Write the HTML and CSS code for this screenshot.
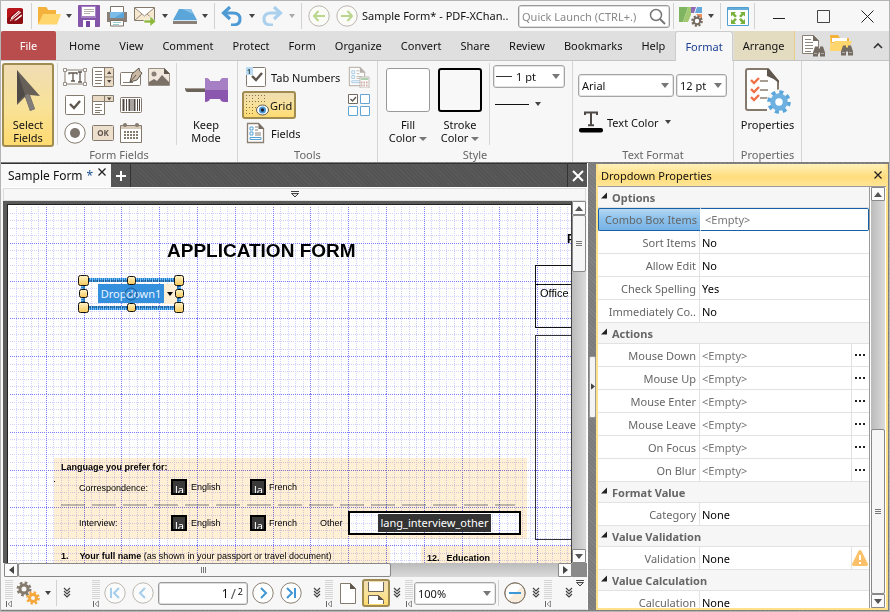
FILE: index.html
```html
<!DOCTYPE html>
<html lang="en">
<head>
<meta charset="utf-8">
<title>Sample Form* - PDF-XChange Editor</title>
<link rel="stylesheet" href="styles.css">
</head>
<body>
<svg class="defs" aria-hidden="true">
  <defs>
    <linearGradient id="gold" x1="0" y1="0" x2="0" y2="1"><stop offset="0" stop-color="#fff4c8"/><stop offset="1" stop-color="#f6c95a"/></linearGradient>
    <symbol id="chevrons" viewBox="0 0 8 12"><path d="M1 1l3 3 3-3M1 4l3 3 3-3M1 7l3 3 3-3" fill="none" stroke="#444" stroke-width="1.2"/></symbol>
    <symbol id="grip" viewBox="0 0 8 28"><path d="M1 1v20M3 1v20M5 1v20M7 1v20" stroke="#b4b4b4" stroke-dasharray="1 1"/><path d="M1.500 22v6" stroke="#666"/><path d="M6.500 22v6l-3.500-3z" fill="none" stroke="#777" stroke-width=".8"/></symbol>
    <symbol id="tri-open" viewBox="0 0 8 8"><path d="M1 6.500h6V.5z" fill="#222"/></symbol>
    <symbol id="arrow-up" viewBox="0 0 8 5"><path d="M0 5l4-5 4 5z" fill="#555"/></symbol>
    <symbol id="arrow-left" viewBox="0 0 5 8"><path d="M5 0L0 4l5 4z" fill="#444"/></symbol>
    <symbol id="binocs" viewBox="0 0 12 11"><path d="M2 1h3v2h2V1h3l2 6v4H7V7H5v4H0V7z" fill="#746b62"/><path d="M1 8h3M8 8h3" stroke="#aaa"/></symbol>
    <symbol id="pagefields" viewBox="0 0 20 22"><path d="M1.500 1.500h11l5 5v14h-16z" fill="#fff" stroke="#8a7f72" stroke-width="1.300"/><path d="M12.500 1v6H18z" fill="#736a60"/><path d="M4 5h3v3H4zM4 10h3v3H4z" fill="none" stroke="#54a0d4"/><path d="M9 5h3M9 8h3M9 11h6M9 13h6" stroke="#8a7f72"/><path d="M4 15.500h11v2H4z" fill="none" stroke="#54a0d4"/></symbol>
  </defs>
</svg>

<header class="titlebar">
  <span class="logo"><svg width="16" height="16" viewBox="0 0 16 16"><rect width="16" height="16" rx="2" fill="#b8141b"/><path d="M0 11Q8 3 16 1v13q0 2-2 2H2q-2 0-2-2z" fill="#8c0d13"/><path d="M3 13.500l1.500-4.500L12 2.500l2 2zM7 12.500l7.500-6 .5 1.500-6 4.500z" fill="#fff"/><path d="M5.500 10l7.500-6.500M4 11.500l2 1" stroke="#b33"/></svg></span>
  <i class="sep"></i>
  <button class="ib" aria-label="Open"><svg width="24" height="20" viewBox="0 0 24 20"><path d="M1 18V1h8l2 3h8v4" fill="#f0a830"/><path d="M1 1h8l2 3h8v6H6L1 18z" fill="#f4b13c"/><path d="M6 8h18l-4 10.500H1z" fill="#ffd56e"/></svg></button>
  <button class="cb" aria-label="Open options"><span class="caret"></span></button>
  <button class="ib" aria-label="Save"><svg width="22" height="22" viewBox="0 0 22 22"><rect width="22" height="22" rx="1" fill="#8455a9"/><path d="M3 1h15v12H3z" fill="#a582c2"/><path d="M4 2h13v9H4z" fill="#fff"/><path d="M6 4.500h10M6 6.500h10M6 8.500h6" stroke="#b8b0a8"/><path d="M5 15h12v7H5z" fill="#fff"/><path d="M8 16h4v6H8z" fill="#7547a0"/></svg></button>
  <button class="ib" aria-label="Print"><svg width="22" height="22" viewBox="0 0 22 22"><path d="M4.500 1.500h13v6h-13z" fill="#fff" stroke="#7d7368"/><path d="M1 7h20v10H1z" fill="#8a8077"/><path d="M4 7h14v6H4z" fill="#5aa6dc"/><path d="M4 7h14L8 13H4z" fill="#7dbce6"/><path d="M4.500 15.500h13V21h-13z" fill="#fff" stroke="#7d7368"/><path d="M7 17.500h8M7 19.500h6" stroke="#9cc"/></svg></button>
  <button class="ib" aria-label="Email"><svg width="24" height="20" viewBox="0 0 24 20"><path d="M1.500 1.500h20v13h-20z" fill="#f7e8d0" stroke="#85796c"/><path d="M2 2l9.500 8L21 2M2 14l7-6M21 14l-7-6" fill="#fff" stroke="#9a8f83"/><path d="M11 14h6v-4l6 5.500-6 5v-3.500h-6z" fill="#8dba3e" stroke="#fff" stroke-width=".6"/></svg></button>
  <button class="cb" aria-label="Email options"><span class="caret"></span></button>
  <button class="ib" aria-label="Scan"><svg width="24" height="17" viewBox="0 0 24 17"><path d="M6 1h12l6 11H0z" fill="#5aa6da"/><path d="M9 1h9l2 5z" fill="#87c0e8"/><path d="M0 12h24v4H0z" fill="#8a8077"/><path d="M0 12.500h24" stroke="#d5e9f6"/></svg></button>
  <button class="cb" aria-label="Scan options"><span class="caret"></span></button>
  <i class="sep"></i>
  <button class="ib" aria-label="Undo"><svg width="22" height="20" viewBox="0 0 22 20"><path d="M3 7h9q7 0 7 6t-7 6h-2" fill="none" stroke="#4d9ad4" stroke-width="3"/><path d="M9 1L2.500 7 9 13" fill="none" stroke="#4d9ad4" stroke-width="3.200"/></svg></button>
  <button class="cb" aria-label="Undo history"><span class="caret"></span></button>
  <button class="ib" aria-label="Redo"><svg width="22" height="20" viewBox="0 0 22 20"><path d="M19 7h-9q-7 0-7 6t7 6h2" fill="none" stroke="#aad0ee" stroke-width="3"/><path d="M13 1l6.500 6-6.500 6" fill="none" stroke="#aad0ee" stroke-width="3.200"/></svg></button>
  <button class="cb" aria-label="Redo history"><span class="caret faint"></span></button>
  <i class="sep"></i>
  <button class="ib" aria-label="Back"><svg width="22" height="22" viewBox="0 0 22 22"><circle cx="11" cy="11" r="10.200" fill="#fbfbf8" stroke="#bdb8b0"/><path d="M17 11H6M10.500 6L6 11l4.500 5" fill="none" stroke="#b9d68c" stroke-width="2"/></svg></button>
  <button class="ib" aria-label="Forward"><svg width="22" height="22" viewBox="0 0 22 22"><circle cx="11" cy="11" r="10.200" fill="#fbfbf8" stroke="#bdb8b0"/><path d="M5 11h11M11.500 6L16 11l-4.500 5" fill="none" stroke="#b9d68c" stroke-width="2"/></svg></button>
  <h1 class="wintitle">Sample Form* - PDF-XChan..</h1>
  <label class="search"><input type="text" placeholder="Quick Launch (CTRL+.)" aria-label="Quick Launch"><svg width="17" height="17" viewBox="0 0 17 17"><circle cx="7" cy="7" r="5.500" fill="none" stroke="#777" stroke-width="1.500"/><path d="M11 11l5 5" stroke="#777" stroke-width="2"/></svg></label>
  <i class="sep"></i>
  <button class="ib" aria-label="UI options"><svg width="24" height="21" viewBox="0 0 24 21"><path d="M0 1h9L4 16H0z" fill="#7fb560"/><path d="M9 1h3v8l-3 7H4z" fill="#a2c972"/><path d="M12 1h5l-2 6h-3z" fill="#9069b4"/><path d="M18 1h5v6h-7z" fill="#65a9dc"/><path d="M17 8h6v6z" fill="#f0925e"/><circle cx="18" cy="15" r="4.500" fill="#fff" stroke="#776c62" stroke-width="2.600" stroke-dasharray="2 1.500"/><circle cx="18" cy="15" r="3.200" fill="#fff" stroke="#776c62" stroke-width="2"/></svg></button>
  <button class="cb" aria-label="UI options menu"><span class="caret"></span></button>
  <i class="sep"></i>
  <button class="ib" aria-label="Full screen"><svg width="22" height="19" viewBox="0 0 22 19"><path d="M.5.5h21v18H.5z" fill="#fff" stroke="#4f9fd2"/><path d="M1 1h20v2H1z" fill="#65add9"/><path d="M4 5h5L7.500 6.500 10 9 8 10.500 5.500 8 4 9.500zM18 5v4.500L16.500 8 14 10.500 12 9l2.500-2.500L13 5zM4 17v-5l1.500 1.500L8 11l2 1.500L7.500 15 9 17zM18 17h-5l1.500-1.500L12 12.500 14 11l2.500 2.500L18 12z" fill="#78b23c"/></svg></button>
  <i class="sep tight"></i>
  <button class="wb" aria-label="Minimize"><svg width="13" height="13"><path d="M0 8.500h12" stroke="#222"/></svg></button>
  <button class="wb" aria-label="Maximize"><svg width="13" height="13"><path d="M.5.5h12v12H.5z" fill="none" stroke="#444"/></svg></button>
  <button class="wb" aria-label="Close"><svg width="13" height="13"><path d="M.5.5l12 12M12.500.5l-12 12" stroke="#222"/></svg></button>
</header>

<nav class="menubar">
  <a class="file" href="#file">File</a>
  <a href="#home">Home</a><a href="#view">View</a><a href="#comment">Comment</a><a href="#protect">Protect</a><a href="#form">Form</a><a href="#organize">Organize</a><a href="#convert">Convert</a><a href="#share">Share</a><a href="#review">Review</a><a href="#bookmarks">Bookmarks</a><a href="#help">Help</a>
  <a class="current" href="#format">Format</a>
  <a class="context" href="#arrange">Arrange</a>
  <span class="menutools">
    <button class="ib" aria-label="Find"><svg width="24" height="23" viewBox="0 0 24 23"><path d="M1.500 1.500h11l5 5v13h-16z" fill="#fff" stroke="#8a7f72"/><path d="M12 1v6h6z" fill="#736a60"/><path d="M4 5.500h6M4 8.500h8M4 11.500h8M4 14.500h8M4 17.500h6" stroke="#8f867c"/><use href="#binocs" x="12" y="11" width="12" height="12"/></svg></button>
    <button class="ib" aria-label="Search"><svg width="24" height="22" viewBox="0 0 24 22"><path d="M1 1h8l2 3h9v5H1z" fill="#f4b13c"/><path d="M3 4h15v4H3z" fill="#fff"/><path d="M1 17V2l2 9 3-4h17l-4 10z" fill="#ffd56e"/><use href="#binocs" x="12" y="10" width="12" height="12"/></svg></button>
    <button class="ib collapse" aria-label="Collapse ribbon"><svg width="10" height="7"><path d="M1 6l4-4 4 4" fill="none" stroke="#333" stroke-width="1.600"/></svg></button>
  </span>
</nav>

<section class="ribbon">
  <div class="group g-fields">
    <div class="gbody">
      <button class="big active"><svg width="30" height="44" viewBox="0 0 30 44"><path d="M4 2l23 26-10-1 5 14-5 2-5-14-8 8z" fill="#666059"/><path d="M4 2l8 25-8 8z" fill="#4f4a46"/><path d="M12 27l4-1 6 15-5 2z" fill="#827d78"/></svg><span>Select<br>Fields</span></button>
      <i class="vsep"></i>
      <div class="icongrid">
        <button class="gi" aria-label="Text field"><svg width="24" height="18" viewBox="0 0 24 18"><path d="M2 2h20v14H2z" fill="#fff" stroke="#857a6e"/><path d="M6 6.500V5h8v1.500M10 5v8M8 13h4M15 4h4M15 14h4M17 4v10" fill="none" stroke="#5f564d" stroke-width="1.300"/><path d="M.5.5h3v3h-3zM20.500.5h3v3h-3zM.5 14.500h3v3h-3zM20.500 14.500h3v3h-3z" fill="#fff" stroke="#857a6e" stroke-width=".8"/></svg></button>
        <button class="gi" aria-label="List box"><svg width="22" height="20" viewBox="0 0 22 20"><rect x=".5" y=".5" width="21" height="19" rx="1" fill="#fff" stroke="#857a6e"/><path d="M13 1h8v18h-8z" fill="#e9dac5"/><path d="M12.500 1v18M13 10h8" stroke="#857a6e"/><path d="M3 4.500h7M3 7.500h7M3 10.500h7M3 13.500h7M3 16.500h6" stroke="#857a6e"/><path d="M15 7l2.200-3 2.200 3zM15 13h4.400l-2.200 3z" fill="#4f4740"/></svg></button>
        <button class="gi" aria-label="Signature"><svg width="24" height="20" viewBox="0 0 24 20"><rect x="1.500" y="5.500" width="20" height="13" rx="1" fill="#fff" stroke="#857a6e"/><path d="M4 15.500h10" stroke="#857a6e"/><path d="M11 15l2-8 7-6q0 4 3 5l-5 7z" fill="#c9b8a4" stroke="#5f564d"/><path d="M11 15l6-7" stroke="#5f564d"/></svg></button>
        <button class="gi" aria-label="Image field"><svg width="22" height="18" viewBox="0 0 22 18"><path d="M.5.5h16l5 5v12H.5z" fill="#f1e8dc" stroke="#9a9085"/><circle cx="6" cy="6" r="2.500" fill="#8a8076"/><path d="M1 17V14l5-3 3 2 5-6 7 7v3z" fill="#7b7167"/><path d="M16 0v6h6z" fill="#5f564d"/></svg></button>
        <button class="gi" aria-label="Check box"><svg width="20" height="20" viewBox="0 0 20 20"><rect x=".5" y=".5" width="19" height="19" rx="1" fill="#fff" stroke="#857a6e"/><path d="M5 9l4 4 6-7" fill="none" stroke="#5f564d" stroke-width="2.400"/></svg></button>
        <button class="gi" aria-label="Dropdown"><svg width="22" height="20" viewBox="0 0 22 20"><path d="M.5.5h21v6H.5z" fill="#e9dac5" stroke="#857a6e"/><path d="M.5 6.500h12v13H.5z" fill="#fff" stroke="#857a6e"/><path d="M12.500 1v5" stroke="#857a6e"/><path d="M15 2.500h4.400l-2.200 3z" fill="#4f4740"/><path d="M3 9.500h7M3 12.500h5M3 15.500h7M3 17.500h5" stroke="#857a6e"/></svg></button>
        <button class="gi" aria-label="Barcode"><svg width="22" height="16" viewBox="0 0 22 16"><rect x=".5" y=".5" width="21" height="15" rx="1" fill="#fff" stroke="#857a6e"/><path d="M3.500 2v12M9.500 2v12M14.500 2v12" stroke="#4f4740" stroke-width="2"/><path d="M6.500 2v12M12 2v12M17.500 2v12M19.500 2v12" stroke="#4f4740"/></svg></button>
        <span></span>
        <button class="gi" aria-label="Radio button"><svg width="22" height="22" viewBox="0 0 22 22"><circle cx="11" cy="11" r="10.200" fill="#fff" stroke="#857a6e"/><circle cx="11" cy="11" r="5" fill="#7d746b"/></svg></button>
        <button class="gi" aria-label="Push button"><svg width="22" height="16" viewBox="0 0 22 16"><rect x=".5" y=".5" width="21" height="15" rx="1" fill="#ecdfcc" stroke="#857a6e"/><text x="11" y="11" class="okt">OK</text></svg></button>
        <button class="gi" aria-label="Date field"><svg width="22" height="21" viewBox="0 0 22 21"><path d="M.5 2.500h21v17H.5z" fill="#fff" stroke="#857a6e"/><path d="M1 3h20v3H1z" fill="#d9cbb9"/><circle cx="5" cy="2" r="2" fill="#857a6e"/><circle cx="17" cy="2" r="2" fill="#857a6e"/><path d="M4 9h14M4 12h14M4 15h14" stroke="#857a6e" stroke-width="2" stroke-dasharray="2 1"/></svg></button>
      </div>
      <i class="vsep"></i>
      <button class="big keep"><svg width="46" height="44" viewBox="0 0 46 44"><path d="M2 20h20v4H4q-2-1-2-4z" fill="#6b625a"/><path d="M3 20.500h19" stroke="#a39a92"/><path d="M22 10q4 0 5 3h10q1-3 4-3h4v24h-4q-3 0-4-3H27q-1 3-5 3z" fill="#8a56ae"/><path d="M22 10q4 0 5 3h10q1-3 4-3h4v12H22z" fill="#a77fc4"/></svg><span>Keep<br>Mode</span></button>
    </div>
    <h2>Form Fields</h2>
  </div>
  <div class="group g-tools">
    <div class="gbody">
      <div class="toollist">
        <button class="tb"><svg width="20" height="20" viewBox="0 0 20 20"><rect x=".5" y=".5" width="19" height="19" rx="1" fill="#fff" stroke="#857a6e"/><path d="M0 0h7v8H0z" fill="#b9daf2"/><text x="3" y="7" class="one">1</text><path d="M6 9l4 4 6-7" fill="none" stroke="#5f564d" stroke-width="2.400"/></svg>Tab Numbers</button>
        <button class="tb active"><svg width="24" height="24" viewBox="0 0 24 24"><path d="M1 2.500h20M1 8.500h20M1 14.500h10M1 20.500h8M1.500 2v20M7.500 2v20M13.500 2v8M19.500 2v8" stroke="#85734a" stroke-dasharray="1 2"/><ellipse cx="17.500" cy="17" rx="6" ry="5" fill="#fff" stroke="#5f564d"/><circle cx="17.500" cy="17" r="3.500" fill="#4a98d4"/><circle cx="17.500" cy="17" r="1.700" fill="#223"/></svg>Grid</button>
        <button class="tb"><svg width="20" height="22"><use href="#pagefields"/></svg>Fields</button>
      </div>
      <div class="toolside">
        <button class="gi off" aria-label="Calculation order"><svg width="22" height="22" viewBox="0 0 22 22"><use href="#pagefields" width="19" height="21"/><path d="M12 11h9v11h-9z" fill="#fff" stroke="#8a7f72"/><path d="M13 12h7v2h-7z" fill="#6a6"/><path d="M13 16.500h7M13 19.500h7" stroke="#a65" stroke-width="2" stroke-dasharray="1.500 1"/></svg></button>
        <button class="gi" aria-label="Highlight fields"><svg width="22" height="22" viewBox="0 0 22 22"><path d="M.5.5h9v9h-9z" fill="#fff" stroke="#746a60"/><path d="M12.500.5h9v9h-9zM.5 12.500h9v9h-9zM12.500 12.500h9v9h-9z" fill="#fff" stroke="#62a6d6"/><path d="M2.500 5l2 2L8 3" fill="none" stroke="#5f564d" stroke-width="1.400"/></svg></button>
      </div>
    </div>
    <h2>Tools</h2>
  </div>
  <div class="group g-style">
    <div class="gbody">
      <button class="swatch"><i class="box"></i><span>Fill<br>Color <span class="caret"></span></span></button>
      <button class="swatch stroke"><i class="box"></i><span>Stroke<br>Color <span class="caret"></span></span></button>
      <i class="vsep"></i>
      <div class="lines">
        <span class="sel weight"><select aria-label="Line width"><option>1 pt</option></select></span>
        <button class="linestyle" aria-label="Line style"><i></i><span class="caret"></span></button>
      </div>
    </div>
    <h2>Style</h2>
  </div>
  <div class="group g-text">
    <div class="gbody">
      <div class="row"><span class="sel font"><select aria-label="Font"><option>Arial</option></select></span><span class="sel size"><select aria-label="Font size"><option>12 pt</option></select></span></div>
      <button class="textcolor"><svg width="24" height="22" viewBox="0 0 24 22"><path d="M6 4V1.500h12V4M12 2v12M9 14.300h6" fill="none" stroke="#4f4a46" stroke-width="2"/><rect y="17" width="24" height="4.500" rx="2" fill="#000"/></svg>Text Color <span class="caret"></span></button>
    </div>
    <h2>Text Format</h2>
  </div>
  <div class="group g-props">
    <div class="gbody">
      <button class="big"><svg width="46" height="46" viewBox="0 0 46 46"><path d="M1 1h22l10 12v29H3q-2 0-2-2z" fill="#fff"/><path d="M33 22V13L23 1H3Q1 1 1 3v37q0 2 2 2h19" fill="none" stroke="#85796c" stroke-width="2"/><path d="M22 1v7q6 2 12 7V13L24 1z" fill="#5f564d"/><path d="M6 12l3 3 5-5M6 21l3 3 5-5M6 29l3 3 5-5" fill="none" stroke="#f07048" stroke-width="2.400"/><path d="M15 13h8M15 22h8M15 30h8" stroke="#a89e94" stroke-width="2"/><circle cx="34" cy="34" r="12.500" fill="#f7f7f7"/><circle cx="34" cy="34" r="9.800" fill="none" stroke="#5aa5da" stroke-width="4" stroke-dasharray="3.900 3.800"/><circle cx="34" cy="34" r="6.200" fill="#fff" stroke="#6eb1e0" stroke-width="5"/></svg><span>Properties</span></button>
    </div>
    <h2>Properties</h2>
  </div>
</section>

<main class="work">
  <section class="docpane">
    <div class="tabstrip">
      <span class="doctab">Sample Form <b>*</b><button aria-label="Close tab"><svg width="8" height="8"><path d="M.5.5l7 7M7.500.5l-7 7" stroke="#222" stroke-width="1.300"/></svg></button></span>
      <button class="plus" aria-label="New tab"><svg width="10" height="10"><path d="M5 0v10M0 5h10" stroke="#fff" stroke-width="2"/></svg></button>
      <button class="closeall" aria-label="Close"><svg width="12" height="12"><path d="M1 1l10 10M11 1L1 11" stroke="#fff" stroke-width="2"/></svg></button>
    </div>
    <div class="rulerbar"><svg width="8" height="7"><path d="M0 .5h8" stroke="#444"/><path d="M.5 2.500h7L4 6z" fill="#ddd" stroke="#444"/></svg></div>
    <div class="viewport">
      <div class="page">
        <h3 class="doctitle">APPLICATION FORM</h3>
        <div class="cream language"></div><div class="cream names"></div><div class="cream edu"></div>
        <div class="officebox"><div></div><p>Office use only</p></div>
        <div class="photobox"></div>
        <b class="photo">Photo</b>
        <i class="speck"></i>
        <b class="t lang">Language you prefer for:</b>
        <p class="t corr">Correspondence:</p><p class="t intv">Interview:</p>
        <p class="t en1">English</p><p class="t fr1">French</p>
        <p class="t en2">English</p><p class="t fr2">French</p><p class="t other">Other</p>
        <svg class="dashes" width="454" height="2"><path d="M0 1h454" stroke="#bdb5aa" stroke-width="2" stroke-dasharray="24 7"/></svg>
        <p class="t name"><b>1.</b><span><b>Your full name</b> (as shown in your passport or travel document)</span></p>
        <b class="t education"><span>12.</span><span>Education</span></b>
        <div class="otherbox"></div>
        <svg class="gridlines" width="100%" height="100%">
          <defs><pattern id="g" x="-1" y="-1" width="189" height="189" patternUnits="userSpaceOnUse">
            <g shape-rendering="crispEdges" stroke-dasharray="1 1" fill="none">
            <path stroke="#d2d2ff" d="M8.500 0V189M15.500 0V189M23.500 0V189M30.500 0V189M45.500 0V189M53.500 0V189M60.500 0V189M68.500 0V189M83.500 0V189M91.500 0V189M98.500 0V189M106.500 0V189M121.500 0V189M129.500 0V189M136.500 0V189M144.500 0V189M159.500 0V189M166.500 0V189M174.500 0V189M181.500 0V189M0 8.500H189M0 15.500H189M0 23.500H189M0 30.500H189M0 45.500H189M0 53.500H189M0 60.500H189M0 68.500H189M0 83.500H189M0 91.500H189M0 98.500H189M0 106.500H189M0 121.500H189M0 129.500H189M0 136.500H189M0 144.500H189M0 159.500H189M0 166.500H189M0 174.500H189M0 181.500H189"/>
            <path stroke="#7c7cff" d="M.5 0V189M38.500 0V189M76.500 0V189M113.500 0V189M151.500 0V189M0 .5H189M0 38.500H189M0 76.500H189M0 113.500H189M0 151.500H189"/>
            </g></pattern></defs>
          <rect width="100%" height="100%" fill="url(#g)"/>
        </svg>
        <span class="mark m1">la</span><span class="mark m2">la</span><span class="mark m3">la</span><span class="mark m4">la</span>
        <span class="otherlabel">lang_interview_other</span>
        <div class="ddfield">
          <span>Dropdown1</span><i class="ddarrow"><i class="caret"></i></i>
          <svg class="handles" width="106" height="38" viewBox="0 0 106 38">
            <path d="M5 5h96v28H5z" fill="none" stroke="#7cc0f2" stroke-width="4"/>
            <path d="M5 5h96v28H5z" fill="none" stroke="#1f7fd0" stroke-width="4" stroke-dasharray="1 1"/>
            <path d="M6 6h94v26H6z" fill="none" stroke="#123f70" stroke-width="1" stroke-dasharray="2 1"/>
            <circle cx="53" cy="19" r="6" fill="none" stroke="#1c5c98"/><path d="M51 19h4M53 17v4" stroke="#1c5c98"/>
            <g fill="url(#gold)" stroke="#111"><rect x=".5" y=".5" width="10" height="10" rx="2"/><rect x="96.500" y=".5" width="9" height="10" rx="2"/><rect x=".5" y="27.500" width="10" height="10" rx="2"/><rect x="96.500" y="27.500" width="9" height="10" rx="2"/><rect x="49.500" y="1.500" width="8" height="8" rx="2"/><rect x="49.500" y="28.500" width="8" height="8" rx="2"/><rect x="1.500" y="14.500" width="8" height="8" rx="2"/><rect x="97.500" y="14.500" width="8" height="8" rx="2"/></g>
          </svg>
        </div>
      </div>
    </div>
    <div class="vscroll">
      <button aria-label="Scroll up"><svg width="8" height="5"><use href="#arrow-up"/></svg></button>
      <div class="track"><div class="thumb docthumb"><i></i></div></div>
      <button aria-label="Scroll down"><svg class="flip" width="8" height="5"><use href="#arrow-up"/></svg></button>
    </div>
    <div class="hscroll">
      <button aria-label="Scroll left"><svg width="5" height="8"><use href="#arrow-left"/></svg></button>
      <div class="track"><div class="thumb"><i></i></div></div>
      <button aria-label="Scroll right"><svg class="flip" width="5" height="8"><use href="#arrow-left"/></svg></button>
    </div>
    <div class="corner"></div>
    <footer class="toolbar">
      <svg class="grip"><use href="#grip"/></svg>
      <button class="ib" aria-label="Options"><svg width="24" height="24" viewBox="0 0 24 24"><g fill="none"><circle cx="8" cy="8" r="6" stroke="#857a6e" stroke-width="3" stroke-dasharray="2.500 2.200"/><circle cx="8" cy="8" r="4" stroke="#857a6e" stroke-width="3"/><circle cx="17" cy="17" r="5.300" stroke="#f5a83c" stroke-width="3" stroke-dasharray="2.200 1.960"/><circle cx="17" cy="17" r="3.500" stroke="#f5a83c" stroke-width="3"/></g></svg></button>
      <button class="cb" aria-label="Options menu"><span class="caret"></span></button>
      <i class="tsep"></i>
      <button class="chev first" aria-label="More"><svg width="8" height="12"><use href="#chevrons"/></svg></button>
      <svg class="grip"><use href="#grip"/></svg>
      <button class="ib" aria-label="First page"><svg width="22" height="22" viewBox="0 0 22 22"><circle cx="11" cy="11" r="10.200" fill="#fbfbfb" stroke="#bdb8b0"/><path d="M7 6v10M15 6l-5 5 5 5" fill="none" stroke="#a5cdec" stroke-width="2"/></svg></button>
      <button class="ib" aria-label="Previous page"><svg width="22" height="22" viewBox="0 0 22 22"><circle cx="11" cy="11" r="10.200" fill="#fbfbfb" stroke="#bdb8b0"/><path d="M13 6l-5 5 5 5" fill="none" stroke="#a5cdec" stroke-width="2"/></svg></button>
      <label class="pageno"><input type="text" value="1" aria-label="Page"><span>/</span><sup>2</sup></label>
      <button class="ib" aria-label="Next page"><svg width="22" height="22" viewBox="0 0 22 22"><circle cx="11" cy="11" r="10.200" fill="#fff" stroke="#8d8377"/><path d="M9 6l5 5-5 5" fill="none" stroke="#4197d6" stroke-width="2"/></svg></button>
      <button class="ib" aria-label="Last page"><svg width="22" height="22" viewBox="0 0 22 22"><circle cx="11" cy="11" r="10.200" fill="#fff" stroke="#8d8377"/><path d="M15 6v10M7 6l5 5-5 5" fill="none" stroke="#4197d6" stroke-width="2"/></svg></button>
      <button class="chev second" aria-label="More"><svg width="8" height="12"><use href="#chevrons"/></svg></button>
      <svg class="grip"><use href="#grip"/></svg>
      <button class="ib" aria-label="Single page"><svg width="16" height="21" viewBox="0 0 16 21"><path d="M.5.5h10l5 5v15H.5z" fill="#fff" stroke="#857a6e"/><path d="M10 0v6h6z" fill="#5f564d"/></svg></button>
      <button class="ib active" aria-label="Continuous"><svg width="18" height="22" viewBox="0 0 18 22"><path d="M1.500 0v9.500h15V0" fill="#fff" stroke="#6f655b"/><path d="M1.500 22v-8.500h10l5 5V22" fill="#fff" stroke="#6f655b"/><path d="M11 13v5h6z" fill="#5f564d"/></svg></button>
      <button class="chev" aria-label="More"><svg width="8" height="12"><use href="#chevrons"/></svg></button>
      <svg class="grip"><use href="#grip"/></svg>
      <span class="sel zoom"><select aria-label="Zoom"><option>100%</option></select></span>
      <i class="tsep"></i>
      <button class="ib" aria-label="Zoom out"><svg width="22" height="22" viewBox="0 0 22 22"><circle cx="11" cy="11" r="10.200" fill="#f8eddd" stroke="#857a6e"/><path d="M4 5.500A10 10 0 0 0 4 18L18 4A10 10 0 0 0 4 5.500z" fill="#fff"/><circle cx="11" cy="11" r="10.200" fill="none" stroke="#857a6e"/><path d="M5 11h12" stroke="#3d97d6" stroke-width="2"/></svg></button>
      <button class="chev" aria-label="More"><svg width="8" height="12"><use href="#chevrons"/></svg></button>
      <svg class="grip"><use href="#grip"/></svg>
      <button class="chev last" aria-label="More"><svg width="8" height="12"><use href="#chevrons"/></svg></button>
      <button class="over" aria-label="Toolbar options"><svg width="8" height="7"><path d="M0 .5h8" stroke="#444"/><path d="M.5 2.500h7L4 6z" fill="#ddd" stroke="#444"/></svg></button>
    </footer>
  </section>

  <div class="splitter"><button aria-label="Collapse pane"><svg class="flip" width="4" height="7" viewBox="0 0 5 8"><use href="#arrow-left"/></svg></button></div>

  <aside class="panel">
    <header><h2>Dropdown Properties</h2><button aria-label="Close panel"><svg width="8" height="8"><path d="M.5.5l7 7M7.500.5l-7 7" stroke="#222" stroke-width="1.300"/></svg></button></header>
    <div class="pbody">
      <div class="tablewrap">
      <table>
        <colgroup><col class="c1"><col><col class="c3"></colgroup>
        <tbody>
        <tr class="head"><th colspan="3"><svg width="8" height="8"><use href="#tri-open"/></svg>Options</th></tr>
        <tr class="selrow"><th>Combo Box Items</th><td colspan="2" class="empty">&lt;Empty&gt;</td></tr>
        <tr><th>Sort Items</th><td colspan="2">No</td></tr>
        <tr><th>Allow Edit</th><td colspan="2">No</td></tr>
        <tr><th>Check Spelling</th><td colspan="2">Yes</td></tr>
        <tr><th>Immediately Co..</th><td colspan="2">No</td></tr>
        <tr class="head"><th colspan="3"><svg width="8" height="8"><use href="#tri-open"/></svg>Actions</th></tr>
        <tr><th>Mouse Down</th><td class="empty">&lt;Empty&gt;</td><td class="more"><button aria-label="Edit"><i></i><i></i><i></i></button></td></tr>
        <tr><th>Mouse Up</th><td class="empty">&lt;Empty&gt;</td><td class="more"><button aria-label="Edit"><i></i><i></i><i></i></button></td></tr>
        <tr><th>Mouse Enter</th><td class="empty">&lt;Empty&gt;</td><td class="more"><button aria-label="Edit"><i></i><i></i><i></i></button></td></tr>
        <tr><th>Mouse Leave</th><td class="empty">&lt;Empty&gt;</td><td class="more"><button aria-label="Edit"><i></i><i></i><i></i></button></td></tr>
        <tr><th>On Focus</th><td class="empty">&lt;Empty&gt;</td><td class="more"><button aria-label="Edit"><i></i><i></i><i></i></button></td></tr>
        <tr><th>On Blur</th><td class="empty">&lt;Empty&gt;</td><td class="more"><button aria-label="Edit"><i></i><i></i><i></i></button></td></tr>
        <tr class="head"><th colspan="3"><svg width="8" height="8"><use href="#tri-open"/></svg>Format Value</th></tr>
        <tr><th>Category</th><td colspan="2">None</td></tr>
        <tr class="head"><th colspan="3"><svg width="8" height="8"><use href="#tri-open"/></svg>Value Validation</th></tr>
        <tr><th>Validation</th><td>None</td><td class="more"><svg width="16" height="16" viewBox="0 0 16 16"><path d="M8 0q1 0 1.500 1L16 14q0 2-1.500 2h-13Q0 16 0 14L6.500 1Q7 0 8 0z" fill="#fbc16a"/><path d="M8 5v5M8 12v2" stroke="#fff" stroke-width="2"/></svg></td></tr>
        <tr class="head"><th colspan="3"><svg width="8" height="8"><use href="#tri-open"/></svg>Value Calculation</th></tr>
        <tr><th>Calculation</th><td colspan="2">None</td></tr>
        </tbody>
      </table>
      </div>
      <div class="vscroll pscroll">
        <button aria-label="Scroll up"><svg width="8" height="5"><use href="#arrow-up"/></svg></button>
        <div class="track"><div class="thumb"><i></i></div></div>
        <button aria-label="Scroll down"><svg class="flip" width="8" height="5"><use href="#arrow-up"/></svg></button>
      </div>
    </div>
  </aside>
</main>
</body>
</html>
```
FILE: styles.css
```css
* { box-sizing: border-box; }
html, body { height: 100%; margin: 0; }
body {
  display: flex; flex-direction: column; overflow: hidden;
  border: 1px solid #b4b4b4; background: #f7f7f7; color: #111;
  font: 11px/13px "Noto Sans", "Open Sans", sans-serif;
}
button, input, select { font: inherit; color: inherit; border: 0; padding: 0; margin: 0; background: none; outline: 0; }
h1, h2, h3, p { margin: 0; font: inherit; }
a { color: inherit; text-decoration: none; }
svg { display: block; flex: none; }
i { font-style: normal; }
.defs { position: absolute; width: 0; height: 0; }
.flip { transform: rotate(180deg); }

.caret { display: inline-block; flex: none; border: 3px solid transparent; border-top: 4px solid #444; border-bottom: 0; }
.caret.faint { border-top-color: #aaa; }

/* Title bar */
.titlebar { display: flex; align-items: center; height: 30px; flex: none; }
.logo { width: 27px; display: flex; justify-content: center; }
.sep { width: 1px; height: 26px; margin: 0 3px; background: #d2d2d2; flex: none; }
.sep.tight { margin: 0 2px; }
.ib { width: 28px; height: 28px; flex: none; display: flex; align-items: center; justify-content: center; }
.cb { width: 12px; height: 28px; flex: none; display: flex; align-items: center; justify-content: center; }
.wintitle { flex: 1; min-width: 0; white-space: nowrap; overflow: hidden; line-height: 16px; padding-left: 1px; }
.search { display: flex; align-items: center; width: 152px; height: 23px; flex: none; border: 1px solid #999; box-shadow: inset 0 0 0 1px #ddd; border-radius: 3px; background: #fff; padding: 0 3px; }
.search input { flex: 1; min-width: 0; }
.search input::placeholder { color: #888; }
.wb { width: 44px; height: 28px; flex: none; display: flex; align-items: center; justify-content: center; }

/* Menu tabs */
.menubar { display: flex; gap: 1px; height: 30px; flex: none; background: #dfdfdf; border-bottom: 1px solid #c4c4c4; }
.menubar a { display: flex; align-items: center; padding: 0 9px; flex: none; }
.menubar .file { width: 55px; justify-content: center; padding: 0; margin-right: 3px; background: #b94c4c; color: #fff; border-radius: 2px 2px 0 0; }
.menubar .current { background: #f7f7f7; color: #1c3f94; height: 30px; border: 1px solid #ccc; border-bottom: 0; border-radius: 3px 3px 0 0; }
.menubar .context { background: #e4dcc0; border-right: 1px solid #e5cf8c; }
.menutools { display: flex; flex: 1; padding-left: 3px; }
.collapse { margin-left: auto; width: 22px; }

/* Ribbon */
.ribbon { display: flex; height: 101px; flex: none; }
.group { display: flex; flex-direction: column; border-right: 1px solid #d4d4d4; flex: none; }
.group h2 { text-align: center; color: #666; line-height: 15px; }
.gbody { display: flex; flex: 1; padding-top: 2px; }
.g-fields { width: 237px; }
.g-tools { width: 140px; }
.g-style { width: 195px; }
.g-text { width: 161px; }
.g-props { width: 68px; }
.vsep { width: 1px; height: 82px; background: #d6d6d6; flex: none; margin: 0 3px; }
.big { display: flex; flex-direction: column; align-items: center; width: 52px; height: 84px; padding-top: 5px; }
.big span { margin-top: 6px; }
.active { background: linear-gradient(#efdcb2, #f8e29a 50%, #ffdb70); border: 2px solid #a08c50; border-radius: 3px; }
.big.active { margin-left: 1px; padding-top: 3px; }
.keep { width: 52px; }
.icongrid { display: grid; grid-template-columns: repeat(4, 28px); grid-auto-rows: 28px; }
.gi { display: flex; align-items: center; justify-content: center; width: 28px; height: 28px; }
.okt { font: bold 8px "Noto Sans", sans-serif; fill: #5f564d; text-anchor: middle; }
.one { font: bold 7px "Noto Sans", sans-serif; fill: #355; text-anchor: middle; }
.off { opacity: .5; }
.toollist { display: flex; flex-direction: column; align-items: flex-start; padding-left: 4px; }
.tb { display: flex; align-items: center; gap: 5px; height: 28px; padding: 0 4px; white-space: nowrap; }
.tb.active { padding: 0 2px 0 1px; gap: 1px; min-width: 54px; }
.toolside { margin-left: auto; padding-right: 4px; }

.swatch { display: flex; flex-direction: column; align-items: center; width: 52px; padding-top: 5px; }
.g-style .gbody { padding-left: 4px; }
.swatch .box { width: 44px; height: 44px; border: 1px solid #999; border-radius: 3px; background: #fff; margin-bottom: 6px; }
.swatch.stroke .box { border: 2px solid #000; background: #f8f8f8; }
.swatch .caret { border-width: 4px 4px 0; border-top-color: #777; vertical-align: 1px; }
.lines { padding-top: 2px; }
.sel { display: inline-flex; position: relative; height: 23px; border: 1px solid #a5a5a5; border-radius: 3px; background: #fff; box-shadow: inset 0 0 0 1px #e4e4e4; }
.sel select { appearance: none; width: 100%; padding-left: 3px; }
.sel::after { content: ""; position: absolute; right: 4px; top: 8px; border: 4px solid transparent; border-top: 5px solid #777; border-bottom: 0; }
.weight { width: 72px; }
.weight select { padding-left: 22px; }
.weight::before { content: ""; position: absolute; left: 2px; top: 10px; width: 16px; height: 1px; background: #333; }
.linestyle { display: flex; align-items: center; gap: 6px; height: 32px; padding-left: 2px; }
.linestyle i { width: 34px; height: 1px; background: #111; }
.g-text .gbody { flex-direction: column; padding: 13px 0 0 5px; align-items: flex-start; }
.row { display: flex; gap: 2px; }
.font { width: 96px; }
.size { width: 51px; }
.textcolor { display: flex; align-items: center; gap: 4px; margin-top: 14px; padding-left: 1px; }
.textcolor .caret { margin-left: 2px; }
.g-props .big { width: 67px; }
.g-props .big span { margin-top: 4px; }

/* Work area */
.work {
  flex: 1; min-height: 0; display: flex; padding: 1px 1px 1px 0;
  background: repeating-linear-gradient(45deg, #858585 0 1px, #7c7c7c 1px 3px);
}
.docpane { flex: 1; min-width: 0; display: grid; grid-template: 24px 13px minmax(0, 1fr) 14px 33px / minmax(0, 1fr) 15px; background: #f7f7f7; border-top: 1px solid #333; }
.tabstrip { grid-column: 1 / 3; display: flex; border-bottom: 1px solid #fff; background: repeating-linear-gradient(45deg, #5a5a5a 0 1px, #545454 1px 3px); }
.doctab { display: flex; align-items: center; width: 110px; background: #f9f9f9; padding: 0 5px 0 7px; font-size: 12px; white-space: nowrap; }
.doctab b { color: #1c4f94; font-weight: normal; margin-left: 4px; }
.doctab button { margin-left: auto; align-self: flex-start; padding-top: 4px; }
.plus { width: 20px; display: flex; align-items: center; justify-content: center; border-right: 1px solid #333; }
.closeall { margin-left: auto; width: 20px; display: flex; align-items: center; justify-content: center; border-left: 1px solid #333; }
.rulerbar { grid-column: 1 / 3; display: flex; align-items: center; justify-content: center; border: 1px solid #ddd; margin: 0 1px 0 2px; }
.viewport { margin-left: 2px; padding: 4px 0 0 5px; background: #5a5a5a; border-right: 1px solid #444; overflow: hidden; }
.page { position: relative; height: 100%; background: #fff; border: solid #fff; border-width: 1px 0 0 1px; overflow: hidden; font-family: "Liberation Sans", Arial, sans-serif; color: #000; box-shadow: 0 0 0 1px #222; }
.page > * { position: absolute; white-space: nowrap; }
.gridlines { left: 0; top: 0; mix-blend-mode: multiply; }
.doctitle { left: 158px; top: 34px; font-weight: bold; font-size: 19px; line-height: 22px; }
.cream { background: #ffefd5; }
.language { left: 45px; top: 252px; width: 473px; height: 81px; }
.names { left: 45px; top: 340px; width: 336px; bottom: 0; }
.edu { left: 412px; top: 340px; right: 0; bottom: 0; }
.officebox { left: 526px; top: 59px; width: 180px; height: 63px; border: 1px solid #111; font-size: 11px; }
.officebox div { height: 19px; border-bottom: 1px solid #111; }
.officebox p { padding: 2px 4px; }
.photobox { left: 526px; top: 129px; width: 180px; height: 205px; border: 1px solid #333; }
.photo { left: 558px; top: 27px; font-size: 12px; }
.speck { left: 45px; top: 275px; width: 1px; height: 1px; background: #000; }
.t { font-size: 9px; line-height: 11px; }
.lang { left: 52px; top: 256px; }
.corr { left: 70px; top: 277px; }
.intv { left: 70px; top: 312px; }
.en1 { left: 182px; top: 276px; }
.en2 { left: 182px; top: 312px; }
.fr1 { left: 260px; top: 276px; }
.fr2 { left: 260px; top: 312px; }
.other { left: 311px; top: 312px; }
.dashes { left: 52px; top: 298px; }
.name { left: 52px; top: 345px; display: flex; gap: 11px; }
.education { left: 418px; top: 347px; display: flex; gap: 7px; }
.otherbox { left: 339px; top: 305px; width: 173px; height: 24px; border: 2px solid #000; background: #fff; }
.mark { width: 16px; height: 16px; border: 2px solid #000; background: #3a3a3a; color: #fff; font: 11px/17px "Noto Sans", sans-serif; overflow: hidden; padding-left: 2px; }
.m1 { left: 162px; top: 273px; }
.m2 { left: 241px; top: 273px; }
.m3 { left: 162px; top: 309px; }
.m4 { left: 241px; top: 309px; }
.otherlabel { left: 369px; top: 308px; width: 113px; background: #333; color: #fff; font: 11px/18px "Noto Sans", sans-serif; text-align: center; }
.ddfield { left: 69px; top: 69px; width: 106px; height: 38px; padding: 9px 0 0 20px; display: flex; }
.ddfield span { width: 66px; height: 19px; background: #348fdd; color: #e8f4ff; font: 11px/19px "Noto Sans", sans-serif; text-align: center; }
.ddarrow { width: 14px; height: 20px; display: flex; align-items: center; padding-left: 3px; background: #ffefd5; }
.ddarrow .caret { border-top-color: #000; }
.handles { position: absolute; left: 0; top: 0; }

/* Scroll bars */
.vscroll, .hscroll { display: flex; background: #c4c4c4; }
.vscroll { flex-direction: column; width: 14px; }
.vscroll button, .hscroll button { width: 14px; height: 14px; flex: none; display: flex; align-items: center; justify-content: center; background: #fbfbfb; border: 1px solid #888; border-radius: 1px; }
.hscroll { margin-left: 3px; }
.track { flex: 1; display: flex; background: linear-gradient(90deg, #bbb, #dadada); }
.hscroll .track { background: linear-gradient(#bbb, #dadada); }
.vscroll .track { flex-direction: column; }
.thumb { display: flex; align-items: center; justify-content: center; background: #f6f6f6; border: 1px solid #888; border-radius: 2px; }
.hscroll .thumb { width: 69%; }
.hscroll .thumb i { width: 6px; height: 6px; background: repeating-linear-gradient(90deg, #777 0 1px, transparent 1px 2px); }
.docthumb { height: 17%; }
.vscroll .thumb i { width: 6px; height: 5px; background: repeating-linear-gradient(#777 0 1px, transparent 1px 2px); }
.corner { background: #8a8a8a; }

/* Bottom toolbar */
.toolbar { grid-column: 1 / 3; display: flex; align-items: center; padding-left: 3px; border-bottom: 1px solid #ddd; }
.grip { width: 8px; height: 28px; margin: 0 1px; flex: none; }
.tsep { width: 1px; height: 26px; margin: 0 2px; background: #d2d2d2; flex: none; }
.chev { width: 14px; height: 28px; flex: none; display: flex; align-items: center; justify-content: center; }
.chev.first { margin: 0 17px 0 1px; }
.chev.second { margin-left: 5px; }
.chev.last { margin-left: 9px; }
.pageno { display: flex; align-items: center; width: 90px; height: 23px; flex: none; margin: 0 1px; padding-right: 4px; border: 1px solid #999; border-radius: 3px; background: #fff; box-shadow: inset 0 0 0 1px #ddd; }
.pageno input { flex: 1; min-width: 0; text-align: right; font-size: 12px; }
.pageno span { margin: 0 2px; font-size: 14px; color: #555; }
.pageno sup { font-size: 9px; line-height: 9px; vertical-align: 0; padding-bottom: 4px; }
.zoom { width: 82px; flex: none; }
.over { margin-left: auto; align-self: flex-start; padding: 3px 3px 0 0; }

/* Splitter */
.splitter { width: 9px; flex: none; display: flex; align-items: center; justify-content: flex-end; border-left: 1px solid #fff; }
.splitter button { width: 7px; height: 62px; background: #f4f4f4; border: 1px solid #999; border-radius: 2px; display: flex; align-items: center; justify-content: center; }

/* Properties panel */
.panel { width: 292px; flex: none; display: flex; flex-direction: column; border: 2px solid #ffe18a; border-top: 0; margin-top: 1px; background: #fff; }
.panel header { display: flex; align-items: center; height: 22px; flex: none; background: linear-gradient(#fff0bb, #ffdd7c 60%, #ffe596); padding: 0 4px 0 3px; }
.panel header h2 { flex: 1; }
.pbody { flex: 1; min-height: 0; display: flex; border: 1px solid #999; border-width: 1px 0 0; }
.tablewrap { flex: 1; min-width: 0; overflow: hidden; border-right: 1px solid #999; }
table { width: 100%; border-collapse: separate; border-spacing: 0; table-layout: fixed; }
.c1 { width: 102px; }
.c3 { width: 18px; }
th, td { height: 23px; padding: 0 3px 0 2px; font-weight: normal; border-bottom: 1px solid #e2e2e2; white-space: nowrap; }
th { text-align: right; color: #666; border-right: 1px solid #e2e2e2; }
td { text-align: left; color: #000; }
td.empty { color: #777; }
.head th { height: 21px; text-align: left; font-weight: bold; background: #f6f6f6; border-right: 0; }
.head svg { display: inline-block; margin-right: 4px; vertical-align: 2px; }
.selrow th { background: linear-gradient(#b7d9f3, #8dc2ec 45%, #76b3e5); border: 1px solid #1660a8; border-right: 0; padding-left: 0; border-radius: 2px 0 0 2px; }
.selrow td { border: 1px solid #1660a8; border-left: 1px solid #fff; padding-left: 4px; border-radius: 0 2px 2px 0; }
td.more { padding: 0; border-left: 1px solid #e2e2e2; }
.more button { display: flex; justify-content: center; gap: 2px; width: 100%; }
.more button i { width: 2px; height: 2px; background: #222; }
.pscroll { margin: 0 1px; width: 14px; }
.pscroll .track { justify-content: flex-end; }
.pscroll .thumb { height: 42%; }
```
